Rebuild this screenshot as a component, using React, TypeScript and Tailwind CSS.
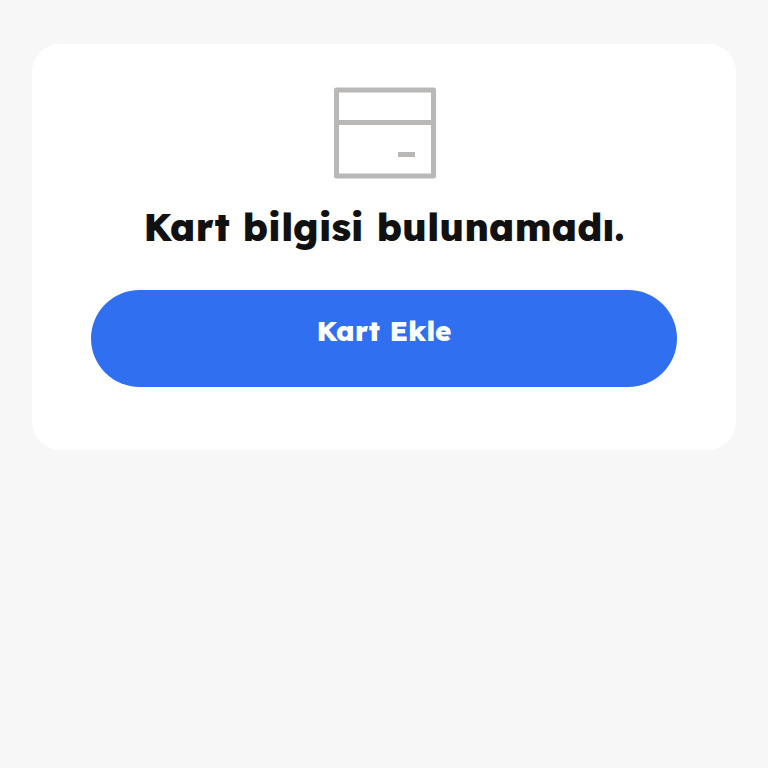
function CardIcon() {
  return (
    <svg
      className="h-[92px] w-[104px]"
      viewBox="0 0 104 92"
      fill="none"
      stroke="#b9b8b7"
      strokeWidth="5"
      strokeLinejoin="round"
      aria-hidden="true"
    >
      <rect x="4.5" y="3" width="97" height="86" />
      <path d="M4.5 35.5h97M66 67.5h17" />
    </svg>
  );
}

export default function App() {
  return (
    <main className="min-h-screen bg-[#f7f7f7] px-8 pt-11 font-['Lexend','Inter',sans-serif]">
      <section className="flex flex-col items-center rounded-[28px] bg-white px-[59px] pt-[43px] pb-[63px]">
        <CardIcon />
        <h1 className="mt-6 text-center text-[38px] leading-[48px] font-extrabold text-[#111111]">
          Kart bilgisi bulunamadı.
        </h1>
        <button
          type="button"
          className="mt-[39px] flex h-[97px] w-full justify-center rounded-full bg-[#306fef] pt-6 text-[28px] leading-[34px] font-extrabold text-white"
        >
          Kart Ekle
        </button>
      </section>
    </main>
  );
}
